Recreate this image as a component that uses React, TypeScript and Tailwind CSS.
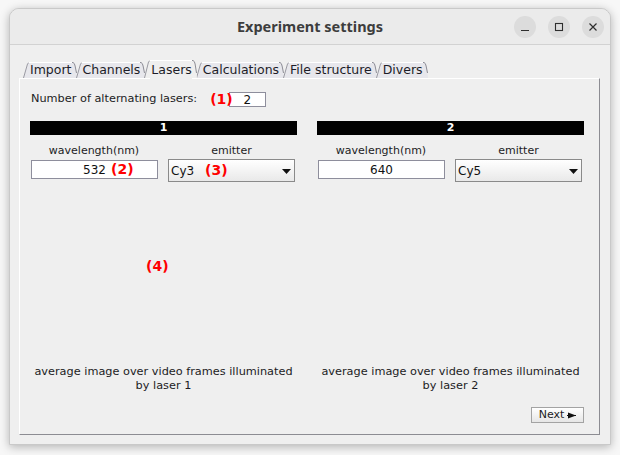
import React from "react";

const ui: React.CSSProperties = { fontFamily: '"DejaVu Sans", "Liberation Sans", sans-serif' };

function Tab({ label, selected, first }: { label: string; selected?: boolean; first?: boolean }) {
  const h = selected ? 18 : 16;
  const fill = selected ? "#efefef" : "#e7e7ec";
  return (
    <div className={`relative flex items-stretch ${selected ? "z-10 h-[19px] -mb-px" : "h-[16px]"} ${first ? "" : "-ml-[1px]"}`}>
      <svg width="6" height={h} className="block shrink-0">
        <polygon points={`0,${h} 4.5,1.5 6,0 6,${h}`} fill={fill} />
        <polyline points={`0.5,${h} 4.5,2 6,0.5`} fill="none" stroke="#9a9aa2" strokeWidth="1" />
      </svg>
      <div
        className={`flex items-center border-t border-white pl-[1px] text-[12.5px] text-[#1d1d28] ${selected ? "bg-[#efefef]" : "bg-[#e7e7ec]"}`}
        style={ui}
      >
        {label}
      </div>
      <svg width="5" height={h} className="block shrink-0">
        <path d={`M0,0 L1,0 Q3,0.5 3.5,4 L5,${h} L0,${h} Z`} fill={fill} />
        <path d={`M0,0.5 L1,0.5 Q2.6,1 3.1,4 L4.5,${h - 5}`} fill="none" stroke="#8d8d95" strokeWidth="1" />
      </svg>
    </div>
  );
}

function Column({
  n,
  wave,
  emitter,
  waveNote,
  emitNote,
  imageNote,
}: {
  n: string;
  wave: string;
  emitter: string;
  waveNote?: string;
  emitNote?: string;
  imageNote?: string;
}) {
  return (
    <div className="flex w-[267px] flex-col" style={ui}>
      <div className="h-[14px] bg-black text-center text-[11px] font-bold leading-[14px] text-white">{n}</div>
      <div className="mt-[8px] flex h-[16px] gap-[10px] text-[11px] leading-[16px] text-[#1c1c24]">
        <div className="w-[128px] text-center">wavelength(nm)</div>
        <div className="w-[127px] text-center">emitter</div>
      </div>
      <div className="flex h-[23px] items-start gap-[10px]">
        <div className="relative ml-[1px] mt-[1px] flex h-[19px] w-[127px] items-center justify-center border border-[#8e8e9c] bg-white text-[12px] text-[#111]">
          <span>{wave}</span>
          {waveNote && (
            <span className="absolute left-[79px] top-[0px] text-[14px] font-bold leading-[17px] text-[#ff0000]">{waveNote}</span>
          )}
        </div>
        <div className="relative flex h-[23px] w-[127px] items-center border border-[#8a8a8a] bg-gradient-to-b from-white to-[#e9e9e9] pl-[2px] text-[12px] text-[#111]">
          <span>{emitter}</span>
          {emitNote && (
            <span className="absolute left-[36px] top-[2px] text-[14px] font-bold leading-[17px] text-[#ff0000]">{emitNote}</span>
          )}
          <svg width="9" height="5" className="absolute right-[3px] top-[9px]">
            <polygon points="0,0 9,0 4.5,5" fill="#111" />
          </svg>
        </div>
      </div>
      <div className="relative h-[183px]">
        {imageNote && (
          <span className="absolute left-[116px] top-[76px] text-[14px] font-bold leading-[17px] text-[#ff0000]">{imageNote}</span>
        )}
      </div>
      <div className="whitespace-nowrap text-center text-[11.3px] leading-[14px] text-[#1c1c24]">
        average image over video frames illuminated
        <br />
        by laser {n}
      </div>
    </div>
  );
}

export default function App() {
  return (
    <div className="h-[455px] w-[620px] overflow-hidden bg-[#f7f7f7] pl-[9px] pt-[8px]">
      <div className="flex h-[437px] w-[602px] flex-col overflow-hidden rounded-t-[10px] border border-[#c9c9c9] bg-[#efefef] shadow-[0_2px_10px_rgba(0,0,0,0.28)]">
        {/* title bar */}
        <div className="grid h-[36px] shrink-0 grid-cols-[1fr_auto_1fr] items-center border-b border-[#d2d2d2] bg-[#ebebeb]">
          <div />
          <div
            className="text-[14.5px] font-bold text-[#3d3d3d]"
            style={{ fontFamily: '"Noto Sans", "DejaVu Sans", sans-serif' }}
          >
            Experiment settings
          </div>
          <div className="flex justify-end gap-[12px] pr-[6px]">
            <div className="flex h-[22px] w-[22px] items-center justify-center rounded-full bg-[#dcdcdc]">
              <svg width="10" height="10">
                <line x1="1" y1="8.5" x2="9" y2="8.5" stroke="#2e2e2e" strokeWidth="1.2" />
              </svg>
            </div>
            <div className="flex h-[22px] w-[22px] items-center justify-center rounded-full bg-[#dcdcdc]">
              <svg width="10" height="10">
                <rect x="1.5" y="1.5" width="7" height="7" fill="none" stroke="#2e2e2e" strokeWidth="1.1" />
              </svg>
            </div>
            <div className="flex h-[22px] w-[22px] items-center justify-center rounded-full bg-[#dcdcdc]">
              <svg width="10" height="10">
                <path d="M1.5,1.5 L8.5,8.5 M8.5,1.5 L1.5,8.5" stroke="#2e2e2e" strokeWidth="1.2" />
              </svg>
            </div>
          </div>
        </div>

        {/* body */}
        <div className="flex flex-1 flex-col pb-[9px] pl-[9px] pr-[10px] pt-[16px]">
          <div className="flex h-[17px] items-end pl-[4px]">
            <Tab label="Import" first />
            <Tab label="Channels" />
            <Tab label="Lasers" selected />
            <Tab label="Calculations" />
            <Tab label="File structure" />
            <Tab label="Divers" />
          </div>
          <div className="flex flex-1 flex-col border border-b-[#8c8c92] border-l-white border-r-[#8c8c92] border-t-white bg-[#efefef]">
            <div className="mt-[13px] flex h-[15px] items-center pl-[11px] text-[11.3px] text-[#1c1c24]" style={ui}>
              <span>Number of alternating lasers:</span>
              <span className="relative z-10 ml-[13px] text-[14px] font-bold leading-[15px] text-[#ff0000]">(1)</span>
              <div className="-ml-[4px] flex h-[15px] w-[37px] items-center justify-center border border-[#8e8e9c] bg-white text-[12px] text-[#111]">
                2
              </div>
            </div>
            <div className="mt-[14px] flex gap-[20px] pl-[10px]">
              <Column n="1" wave="532" emitter="Cy3" waveNote="(2)" emitNote="(3)" imageNote="(4)" />
              <Column n="2" wave="640" emitter="Cy5" />
            </div>
            <div className="mb-[11px] mr-[15px] mt-auto flex justify-end">
              <button
                className="flex h-[16px] w-[53px] items-center justify-center gap-[3px] border border-[#a3a3a3] bg-gradient-to-b from-white to-[#e6e6e6] text-[11px] text-[#1c1c24]"
                style={ui}
              >
                <span>Next</span>
                <svg width="9" height="7">
                  <polygon points="1,0.5 9,3.5 1,6.5" fill="#111" />
                  <line x1="0" y1="3.5" x2="9" y2="3.5" stroke="#111" strokeWidth="1" />
                </svg>
              </button>
            </div>
          </div>
        </div>
      </div>
    </div>
  );
}
